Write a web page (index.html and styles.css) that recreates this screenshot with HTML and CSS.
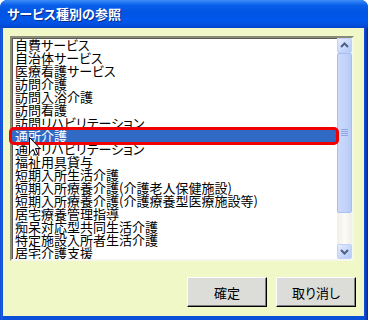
FILE: index.html
```html
<!DOCTYPE html>
<html lang="ja">
<head>
<meta charset="utf-8">
<title>サービス種別の参照</title>
<link rel="stylesheet" href="styles.css">
</head>
<body>
<div class="window">
  <div class="titlebar"><span class="title">サービス種別の参照</span></div>
  <div class="client">
    <div class="listbox">
      <ul class="items">
        <li>自費サービス</li>
        <li>自治体サービス</li>
        <li>医療看護サービス</li>
        <li>訪問介護</li>
        <li>訪問入浴介護</li>
        <li>訪問看護</li>
        <li>訪問リハビリテーション</li>
        <li class="sel">通所介護</li>
        <li>通所リハビリテーション</li>
        <li>福祉用具貸与</li>
        <li>短期入所生活介護</li>
        <li>短期入所療養介護(介護老人保健施設)</li>
        <li>短期入所療養介護(介護療養型医療施設等)</li>
        <li>居宅療養管理指導</li>
        <li>痴呆対応型共同生活介護</li>
        <li>特定施設入所者生活介護</li>
        <li>居宅介護支援</li>
      </ul>
      <div class="scrollbar">
        <div class="sb-btn"><svg width="13" height="13" viewBox="0 0 13 13"><path d="M3 8 L6.5 4.5 L10 8" fill="none" stroke="#4d6185" stroke-width="2"/></svg></div>
        <div class="sb-thumb"><svg width="7" height="8" viewBox="0 0 7 8"><path d="M0 0.5H7M0 2.5H7M0 4.5H7M0 6.5H7" stroke="#8ca6e8" stroke-width="1"/></svg></div>
        <div class="sb-track"></div>
        <div class="sb-btn"><svg width="13" height="13" viewBox="0 0 13 13"><path d="M3 5 L6.5 8.5 L10 5" fill="none" stroke="#4d6185" stroke-width="2"/></svg></div>
      </div>
    </div>
    <div class="buttons">
      <button class="btn">確定</button>
      <button class="btn">取り消し</button>
    </div>
  </div>
  <div class="annot"></div>
  <svg class="cursor" width="12" height="20" viewBox="0 0 12 20"><path d="M0.5 0.5 L0.5 16 L4.2 12.4 L6.6 18.2 L8.8 17.3 L6.4 11.6 L11.2 11.6 Z" fill="#fff" stroke="#000" stroke-width="1" stroke-linejoin="miter"/></svg>
</div>
</body>
</html>
```
FILE: styles.css
```css
html, body {
  margin: 0;
  padding: 0;
  background: #ffffff;
}
body {
  width: 368px;
  height: 320px;
  overflow: hidden;
  font-family: "Noto Sans CJK JP", "Noto Sans", sans-serif;
  font-feature-settings: "palt";
}
.window {
  position: relative;
  width: 368px;
  height: 320px;
  box-sizing: border-box;
  display: flex;
  flex-direction: column;
  background: linear-gradient(90deg, #0a3fc4 0, #1d63e8 1px, #0a4fd8 3px, #0a4fd8 364px, #1248c8 365px, #002a9c 368px);
  border-radius: 7px 7px 0 0;
  overflow: hidden;
}
.titlebar {
  height: 28px;
  flex: none;
  display: flex;
  align-items: center;
  padding-left: 7px;
  background: linear-gradient(180deg, #3f8ef5 0, #2a7cf6 2px, #0a60ea 5px, #0054e3 12px, #0057ea 20px, #0350de 25px, #0043c6 28px);
  border-radius: 7px 7px 0 0;
}
.title {
  color: #ffffff;
  font-size: 13px;
  font-weight: bold;
  line-height: 14px;
  text-shadow: 1px 1px 0 #0a2a8a;
}
.client {
  flex: 1;
  margin: 0 4px 4px 3px;
  background: #f1f8c8;
  padding: 8px 10px 0 7px;
  display: flex;
  flex-direction: column;
}
.listbox {
  height: 225px;
  box-sizing: border-box;
  border-style: solid;
  border-width: 2px;
  border-color: #8a8a78 #f6f6ee #f6f6ee #8a8a78;
  box-shadow: inset 1px 1px 0 #5a5a50;
  background: #ffffff;
  display: flex;
}
.items {
  flex: 1;
  list-style: none;
  margin: 0;
  padding: 0;
  overflow: hidden;
}
.items li {
  height: 13px;
  line-height: 13px;
  padding-left: 3px;
  font-size: 13px;
  color: #000000;
  white-space: nowrap;
}
.items li.sel {
  background: #316ac5;
  color: #ffffff;
}
.scrollbar {
  width: 15px;
  flex: none;
  display: flex;
  flex-direction: column;
  background: #f4f3ee;
}
.sb-btn {
  height: 15px;
  box-sizing: border-box;
  border: 1px solid #c0d0f8;
  border-radius: 2px;
  background: linear-gradient(135deg, #e6eefe 0, #c6d6fb 60%, #b4c8f6 100%);
  display: flex;
  align-items: center;
  justify-content: center;
}
.sb-thumb {
  height: 160px;
  box-sizing: border-box;
  border: 1px solid #aabff0;
  border-radius: 2px;
  background: linear-gradient(90deg, #cbd9fc 0, #c2d3fb 60%, #b7caf6 100%);
  display: flex;
  align-items: center;
  justify-content: center;
}
.sb-track {
  flex: 1;
  background: linear-gradient(90deg, #f0efe8 0, #fbfbf8 50%, #f0efe8 100%);
}
.buttons {
  display: flex;
  justify-content: flex-end;
  gap: 9px;
  margin-top: 16px;
  margin-right: -2px;
}
.btn {
  width: 80px;
  height: 30px;
  box-sizing: border-box;
  font-family: "Noto Sans CJK JP", "Noto Sans", sans-serif;
  font-feature-settings: "palt";
  font-size: 13px;
  color: #000000;
  background: #dcdcd8;
  border-style: solid;
  border-width: 1px;
  border-color: #ffffff #000000 #000000 #ffffff;
  box-shadow: inset -1px -1px 0 #808080;
  padding: 0;
}
.annot {
  position: absolute;
  left: 9px;
  top: 127px;
  width: 330px;
  height: 18px;
  box-sizing: border-box;
  border: 3px solid #f00000;
  border-radius: 5px;
}
.cursor {
  position: absolute;
  left: 29px;
  top: 137px;
}
```
